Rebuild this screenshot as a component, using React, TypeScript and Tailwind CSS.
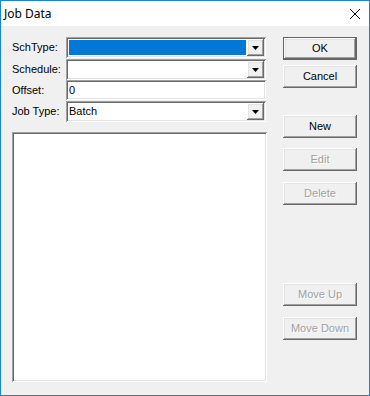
import React from 'react';

const sunken =
  'shadow-[inset_1px_1px_0_#a0a0a0,inset_-1px_-1px_0_#ffffff,inset_2px_2px_0_#696969,inset_-2px_-2px_0_#e3e3e3]';
const raised =
  'shadow-[inset_-1px_-1px_0_#696969,inset_1px_1px_0_#ffffff,inset_-2px_-2px_0_#a0a0a0,inset_2px_2px_0_#e3e3e3]';

const DropArrow: React.FC = () => (
  <div className={`w-[17px] h-full bg-[#f0f0f0] flex items-center justify-center ${raised}`}>
    <svg width="7" height="4" viewBox="0 0 7 4">
      <path d="M0 0h7L3.5 4z" fill="#000" />
    </svg>
  </div>
);

interface FieldProps {
  label: string;
  h: string;
  mb: string;
  children: React.ReactNode;
}

const Row: React.FC<FieldProps> = ({ label, h, mb, children }) => (
  <div className={`flex items-center ${mb}`}>
    <span className="w-[54px] text-[11px] leading-none text-black">{label}</span>
    <div className={`w-[200px] ${h} bg-white p-[2px] ${sunken}`}>{children}</div>
  </div>
);

interface BtnProps {
  label: string;
  mt?: string;
  disabled?: boolean;
  isDefault?: boolean;
}

const Btn: React.FC<BtnProps> = ({ label, mt = '', disabled, isDefault }) => (
  <div className={`${mt} w-[74px] h-[23px] ${isDefault ? 'border border-[#646464]' : ''}`}>
    <div
      className={`w-full h-full bg-[#f0f0f0] flex items-center justify-center text-[11px] ${raised} ${
        disabled ? 'text-[#a0a0a0] [text-shadow:1px_1px_0_#ffffff]' : 'text-black'
      }`}
    >
      {label}
    </div>
  </div>
);

export default function App() {
  return (
    <div
      className="w-[370px] h-[396px] border border-[#1883d7] bg-[#f0f0f0] flex flex-col"
      style={{ fontFamily: '"Liberation Sans", Arial, sans-serif' }}
    >
      <div className="h-[25px] bg-white flex items-center justify-between pl-[3px] pr-[9px]">
        <span className="text-[12px] text-black" style={{ fontFamily: '"Noto Sans", "Liberation Sans", sans-serif' }}>
          Job Data
        </span>
        <svg width="10" height="10" viewBox="0 0 10 10">
          <path d="M0 0L10 10M10 0L0 10" stroke="#000" strokeWidth="1" />
        </svg>
      </div>

      <div className="flex-1 flex pt-[11px] pl-[11px] pr-[11px]">
        <div className="w-[254px] flex flex-col">
          <Row label="SchType:" h="h-[21px]" mb="mb-[1px]">
            <div className="flex h-full">
              <div className="flex-1 p-[1px]">
                <div className="w-full h-full bg-[#0078d7]" />
              </div>
              <DropArrow />
            </div>
          </Row>
          <Row label="Schedule:" h="h-[21px]" mb="mb-0">
            <div className="flex h-full">
              <div className="flex-1" />
              <DropArrow />
            </div>
          </Row>
          <Row label="Offset:" h="h-[20px]" mb="mb-[1px]">
            <div className="h-full flex items-center pl-[1px] text-[11px] text-black">0</div>
          </Row>
          <Row label="Job Type:" h="h-[21px]" mb="mb-[10px]">
            <div className="flex h-full">
              <div className="flex-1 flex items-center pl-[1px] text-[11px] text-black">Batch</div>
              <DropArrow />
            </div>
          </Row>
          <div className={`h-[250px] w-[255px] bg-white ${sunken}`} />
        </div>

        <div className="ml-[17px] flex flex-col">
          <Btn label="OK" isDefault />
          <Btn label="Cancel" mt="mt-[5px]" />
          <Btn label="New" mt="mt-[27px]" />
          <Btn label="Edit" mt="mt-[10px]" disabled />
          <Btn label="Delete" mt="mt-[11px]" disabled />
          <Btn label="Move Up" mt="mt-[78px]" disabled />
          <Btn label="Move Down" mt="mt-[11px]" disabled />
        </div>
      </div>
    </div>
  );
}
